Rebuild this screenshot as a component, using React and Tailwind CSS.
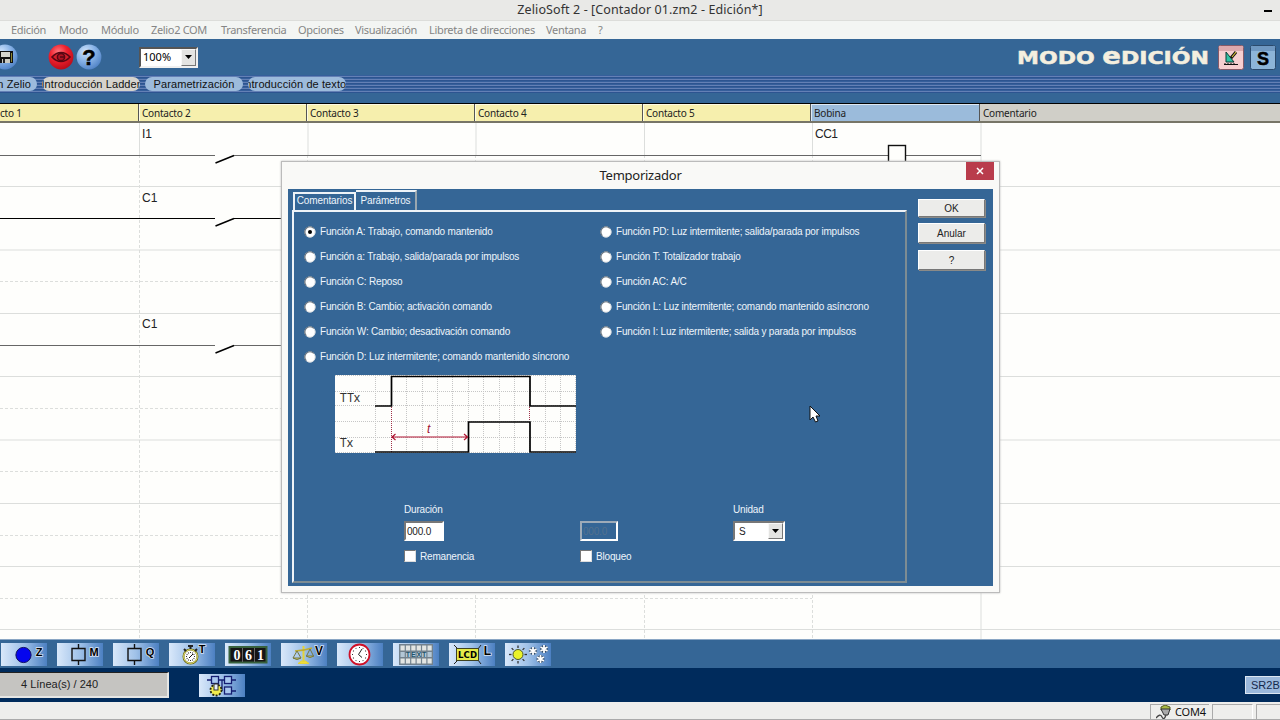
import React, { useState } from "react";

const menu = [
  { label: "Edición", w: "w-[48px]" },
  { label: "Modo", w: "w-[42px]" },
  { label: "Módulo", w: "w-[50px]" },
  { label: "Zelio2 COM", w: "w-[70px]" },
  { label: "Transferencia", w: "w-[77px]" },
  { label: "Opciones", w: "w-[57px]" },
  { label: "Visualización", w: "w-[74px]" },
  { label: "Libreta de direcciones", w: "w-[117px]" },
  { label: "Ventana", w: "w-[52px]" },
  { label: "?", w: "w-[20px]" },
];

const leftFunctions = [
  "Función A: Trabajo, comando mantenido",
  "Función a: Trabajo, salida/parada por impulsos",
  "Función C: Reposo",
  "Función B: Cambio; activación comando",
  "Función W: Cambio; desactivación comando",
  "Función D: Luz intermitente; comando mantenido síncrono",
];

const rightFunctions = [
  "Función PD: Luz intermitente; salida/parada por impulsos",
  "Función T: Totalizador trabajo",
  "Función AC: A/C",
  "Función L: Luz intermitente; comando mantenido asíncrono",
  "Función I: Luz intermitente; salida y parada por impulsos",
];

function SaveIcon() {
  return (
    <svg width="19" height="26" viewBox="0 0 19 26">
      <circle cx="5" cy="13" r="12.5" fill="url(#ball)" />
      <path d="M-2 7H13V19H0L-2 17Z" fill="#111" />
      <rect x="1" y="8" width="9" height="5" fill="#d5d5ce" />
      <rect x="2" y="15" width="8" height="4" fill="#c9c9c0" />
      <rect x="3" y="15" width="2" height="4" fill="#222" />
      <path d="M11.500 9V18" stroke="#8a8632" />
    </svg>
  );
}

function EyeIcon() {
  return (
    <svg width="26" height="26" viewBox="0 0 26 26">
      <defs>
        <radialGradient id="redball" cx="40%" cy="30%" r="75%">
          <stop offset="0" stopColor="#ff7a80" />
          <stop offset=".45" stopColor="#f0222f" />
          <stop offset="1" stopColor="#b50a17" />
        </radialGradient>
      </defs>
      <circle cx="13" cy="13" r="12.400" fill="url(#redball)" />
      <path
        d="M4 13Q8 8.500 13 8.500T22 13Q18 17.500 13 17.500T4 13Z"
        fill="#d3202b"
        stroke="#560713"
        strokeWidth="1.600"
      />
      <circle cx="13" cy="13" r="3.600" fill="#b01422" stroke="#560713" strokeWidth="1.500" />
      <path d="M12 13H16" stroke="#560713" strokeWidth="1.500" />
    </svg>
  );
}

function HelpIcon() {
  return (
    <svg width="26" height="26" viewBox="0 0 26 26">
      <defs>
        <radialGradient id="ball" cx="35%" cy="28%" r="80%">
          <stop offset="0" stopColor="#cfe3fb" />
          <stop offset=".5" stopColor="#86b1e6" />
          <stop offset="1" stopColor="#4c7fc4" />
        </radialGradient>
      </defs>
      <circle cx="13" cy="13" r="12.400" fill="url(#ball)" />
      <text
        x="13"
        y="21"
        textAnchor="middle"
        fontFamily="Liberation Sans, sans-serif"
        fontWeight="bold"
        fontSize="22"
        stroke="#000"
        strokeWidth=".5"
      >
        ?
      </text>
    </svg>
  );
}

function Arrow() {
  return (
    <svg width="7" height="4" viewBox="0 0 7 4">
      <path d="M0 0H7L3.500 4Z" />
    </svg>
  );
}

function DropButton() {
  return (
    <span className="flex h-full w-[15px] items-center justify-center border border-t-[#f8f8f8] border-r-[#777] border-b-[#777] border-l-[#f8f8f8] bg-[#e4e4e2]">
      <Arrow />
    </span>
  );
}

function Toolbar() {
  return (
    <div className="flex h-9 items-center">
      <SaveIcon />
      <div className="ml-[29px] flex gap-[2px]">
        <EyeIcon />
        <HelpIcon />
      </div>
      <div className="ml-[37px] flex h-[21px] w-[59px] items-center justify-between border-2 border-t-[#555] border-r-[#f0f0f0] border-b-[#f0f0f0] border-l-[#555] bg-white pl-[2px] text-[11px]">
        <span className="font-['Noto_Sans',sans-serif]">100%</span>
        <DropButton />
      </div>
      <svg className="ml-auto" width="200" height="36" viewBox="0 0 200 36">
        <text
          x="4"
          y="25"
          textLength="192"
          lengthAdjust="spacingAndGlyphs"
          fontFamily="DejaVu Sans, sans-serif"
          fontWeight="bold"
          fontSize="18.500"
          fill="#f4efdf"
          stroke="#f4efdf"
          strokeWidth=".5"
        >
          MODO <tspan fontSize="23">e</tspan>DICIÓN
        </text>
      </svg>
      <svg className="ml-[5px]" width="26" height="25" viewBox="0 0 26 25">
        <rect x=".5" y=".5" width="25" height="24" rx="2" fill="#f6cfd0" stroke="#865a67" />
        <rect x="1" y="1" width="24" height="5" fill="#dca9ad" />
        <path d="M8 7V17H16Z" fill="#31c2a4" stroke="#0b3b35" />
        <path d="M6 19.500H20M7 18V20M10 18V20M13 18V20M16 18V20" stroke="#111" />
        <path d="M13 13L18 7" stroke="#111" strokeWidth="3" />
        <path d="M14 12L18 7" stroke="#e1c63c" strokeWidth="1.200" />
      </svg>
      <svg className="mr-[4px] ml-[6px]" width="26" height="25" viewBox="0 0 26 25">
        <rect x=".5" y=".5" width="25" height="24" rx="2" fill="#8db5d8" stroke="#2b4a6c" />
        <rect x="1" y="1" width="24" height="5" fill="#6f98c1" />
        <text
          x="13"
          y="19.500"
          textAnchor="middle"
          fontFamily="Liberation Sans, sans-serif"
          fontWeight="bold"
          fontSize="18"
          stroke="#000"
          strokeWidth=".5"
        >
          S
        </text>
      </svg>
    </div>
  );
}

function ModeTab({ children, active }) {
  return (
    <div
      className={`flex h-[14px] w-[98px] items-center justify-center overflow-hidden rounded-full whitespace-nowrap ${
        active ? "bg-[#d5d3cd]" : "bg-[#9dbbdc]"
      }`}
    >
      {children}
    </div>
  );
}

function ModeTabs() {
  return (
    <div className="h-7">
      <div className="flex h-[18px] items-center gap-[5px] bg-[repeating-linear-gradient(to_bottom,#365f9b_0px,#365f9b_1px,#6480b5_1px,#6480b5_2px,#2d5490_2px,#2d5490_3px)] text-[11px] tracking-[0.1px] text-[#111]">
        <div className="flex h-[14px] w-[37px] items-center justify-end overflow-hidden rounded-r-full bg-[#9dbbdc] pr-[6px] whitespace-nowrap">
          Configuración Zelio
        </div>
        <ModeTab active>Introducción Ladder</ModeTab>
        <ModeTab>Parametrización</ModeTab>
        <ModeTab>Introducción de textos</ModeTab>
      </div>
    </div>
  );
}

function HeaderCell({ children, className }) {
  return (
    <div className={`flex items-center border-r border-[#555] pt-px pl-[3px] shadow-[inset_1px_1px_0_#ffffffaa] ${className}`}>
      {children}
    </div>
  );
}

function ColumnHeaders() {
  return (
    <div className="flex h-5 border-t border-b-2 border-t-black border-b-[#777567] font-['Noto_Sans',sans-serif] text-[10px] tracking-[-0.2px] text-[#222]">
      <div className="flex w-[139px] items-center border-r border-[#555] bg-[#f6efad] pt-px">cto 1</div>
      <HeaderCell className="w-[168px] bg-[#f6efad]">Contacto 2</HeaderCell>
      <HeaderCell className="w-[168px] bg-[#f6efad]">Contacto 3</HeaderCell>
      <HeaderCell className="w-[168px] bg-[#f6efad]">Contacto 4</HeaderCell>
      <HeaderCell className="w-[168px] bg-[#f6efad]">Contacto 5</HeaderCell>
      <HeaderCell className="w-[169px] bg-[#9bbbdb]">Bobina</HeaderCell>
      <div className="flex flex-1 items-center bg-[#d0cfc8] pt-px pl-[3px]">Comentario</div>
    </div>
  );
}

function Ladder() {
  const rungs = [32.5, 95.5, 222.5];
  return (
    <svg className="block" width="1280" height="516" viewBox="0 0 1280 516">
      <rect width="1280" height="516" fill="#fefefc" />
      <g stroke="#dcdedc">
        {[63.5, 127, 190.5, 253.5, 317, 380.5, 443.5, 506.5].map((y) => (
          <path key={y} d={`M0 ${y}H1280`} />
        ))}
        <g strokeDasharray="3 2">
          {[158.5, 285.5, 348.5, 412.5, 475.5].map((y) => (
            <path key={y} d={`M0 ${y}H812`} />
          ))}
          {[139.5, 307.5, 475.5, 644.5, 812.5].map((x) => (
            <path key={x} d={`M${x} 32V516`} />
          ))}
        </g>
        {[139.5, 308, 476, 644.5, 812.5].map((x) => (
          <path key={x} d={`M${x} 0V32`} />
        ))}
        <path d="M981 0V516" />
      </g>
      {rungs.map((y, i) => (
        <g key={y}>
          <path
            d={`M0 ${y}H215M234 ${y}H${i === 0 ? 888 : 290}`}
            stroke={i === 1 ? "#000" : "#666"}
          />
          <path d={`M215.500 ${y + 7.5}L234 ${y}`} stroke="#000" strokeWidth="1.500" />
        </g>
      ))}
      <path d="M906 32.500H981" stroke="#666" />
      <rect x="888.500" y="22.500" width="17" height="20" fill="#fefefc" stroke="#111" strokeWidth="1.400" />
      <g fontFamily="Liberation Sans, sans-serif" fontSize="12" fill="#222">
        <text x="142" y="15">I1</text>
        <text x="142" y="79">C1</text>
        <text x="142" y="205">C1</text>
        <text x="815" y="15" textLength="23">CC1</text>
      </g>
    </svg>
  );
}

function Letter({ x, y, size = 12, anchor = "middle", fill = "#000", children }) {
  return (
    <text
      x={x}
      y={y}
      textAnchor={anchor}
      fontFamily="Liberation Sans, sans-serif"
      fontWeight="bold"
      fontSize={size}
      fill={fill}
      stroke="#d6e4f6"
      strokeWidth="1.600"
      paintOrder="stroke"
    >
      {children}
    </text>
  );
}

function Tool({ children }) {
  return (
    <div className="h-[23px] w-[46px] bg-linear-to-r from-[#d9e8fa] via-[#9fc1e8] to-[#4c80c2]">
      <svg width="46" height="23" viewBox="0 0 46 23">
        {children}
      </svg>
    </div>
  );
}

function Block({ letter }) {
  return (
    <Tool>
      <path d="M21.500 1V5M21.500 18V22M15 5.500H28V17.500H15Z" fill="none" stroke="#111" strokeWidth="1.400" />
      <Letter x="37" y="13" size="11">
        {letter}
      </Letter>
    </Tool>
  );
}

function BlockBar() {
  const ticks = [0, 30, 60, 90, 120, 150, 180, 210, 240, 270, 300, 330];
  return (
    <div className="flex h-[29px] items-center gap-[10px] border-t border-[#8aa6c4] bg-[#356696] pl-px">
      <Tool>
        <circle cx="22.500" cy="12" r="7.600" fill="#0505ee" stroke="#101060" />
        <Letter x="38" y="13" size="11">Z</Letter>
      </Tool>
      <Block letter="M" />
      <Block letter="Q" />
      <Tool>
        <circle cx="21.500" cy="13.500" r="7" fill="#fff" stroke="#6d6a18" strokeWidth="2" />
        <circle cx="21.500" cy="13.500" r="6.800" fill="none" stroke="#eeea78" strokeWidth="1" />
        <path d="M19 3H24M21.500 3V6M15 6L17 8M28 6L26 8" stroke="#222" strokeWidth="2" />
        <path d="M20 15L24 11" stroke="#111" />
        {ticks.map((a) => (
          <path key={a} d="M21.500 9V10" stroke="#333" transform={`rotate(${a} 21.5 13.5)`} />
        ))}
        <Letter x="33" y="10" size="11">T</Letter>
      </Tool>
      <Tool>
        <rect x="4.500" y="4" width="37" height="15.500" fill="#151515" stroke="#37613c" strokeWidth="2" />
        <path d="M17.500 5V19M29.500 5V19" stroke="#666" />
        <g
          fontFamily="Liberation Serif, serif"
          fontWeight="bold"
          fontSize="14"
          fill="#fff"
          textAnchor="middle"
        >
          <text x="12" y="16.500">0</text>
          <text x="23.500" y="16.500">6</text>
          <text x="35.500" y="16.500">1</text>
        </g>
      </Tool>
      <Tool>
        <path d="M17 20.500H28L24.500 18H20.500Z" fill="#f1df36" stroke="#e4d33a" />
        <path d="M22.500 3V19" stroke="#e4d33a" strokeWidth="2" />
        <path d="M14 8Q22 8 31 5" fill="none" stroke="#c0ad30" strokeWidth="1.500" />
        <path d="M16 8L12 15H20ZM29 6L25.500 13H32.500Z" fill="none" stroke="#76773c" />
        <path d="M12 15Q16 18 20 15M25 13Q29 16 33 13" fill="#aeb15e" stroke="#76773c" />
        <Letter x="38" y="12" size="12">V</Letter>
      </Tool>
      <Tool>
        <circle cx="22.500" cy="11.500" r="10" fill="#fff" stroke="#cf1027" strokeWidth="1.800" />
        {ticks.map((a) => (
          <path key={a} d="M22.500 4V5" stroke="#333" transform={`rotate(${a} 22.5 11.5)`} />
        ))}
        <path d="M25 6L21.500 11.500L25 14.500" fill="none" stroke="#222" />
      </Tool>
      <Tool>
        <rect x="6" y="1" width="34" height="21" fill="#73828e" />
        {[0, 1, 2].map((r) =>
          [0, 1, 2, 3, 4, 5].map((c) => (
            <rect
              key={`${r}-${c}`}
              x={7.5 + c * 5.4}
              y={2.5 + r * 6.5}
              width="4.200"
              height="5"
              fill={r === 1 ? "#b3c7d6" : "#e3e5e2"}
            />
          ))
        )}
        <g fontFamily="Liberation Sans, sans-serif" fontSize="7" fontWeight="bold" fill="#24556c" textAnchor="middle">
          <text x="15" y="14">T</text>
          <text x="20.400" y="14">E</text>
          <text x="25.800" y="14">X</text>
          <text x="31.200" y="14">T</text>
        </g>
      </Tool>
      <Tool>
        <path d="M5 2L9 6M5 21L9 17M32 2L29 6M32 21L29 17" stroke="#222" />
        <rect x="7.500" y="5.500" width="22" height="12" fill="#e6ea49" stroke="#3f4220" />
        <text x="18.500" y="15" textAnchor="middle" fontFamily="DejaVu Sans, sans-serif" fontWeight="bold" fontSize="8.500" textLength="19">
          LCD
        </text>
        <Letter x="38.500" y="12" size="12">L</Letter>
      </Tool>
      <Tool>
        {[0, 45, 90, 135, 180, 225, 270, 315].map((a) => (
          <path key={a} d="M13 2.500V5" stroke="#333" strokeWidth="1.300" transform={`rotate(${a} 13 11.5)`} />
        ))}
        <circle cx="13" cy="11.500" r="5" fill="#eaf32b" stroke="#4e5a28" />
        {[
          [28, 8],
          [39, 6],
          [35.5, 16],
        ].map(([x, y]) => (
          <g key={x} transform={`translate(${x} ${y})`}>
            <path d="M0-4V4M-3.500-2L3.500 2M3.500-2L-3.500 2" stroke="#263f5a" strokeWidth="3" />
            <path d="M0-4V4M-3.500-2L3.500 2M3.500-2L-3.500 2" stroke="#fff" strokeWidth="1.800" />
          </g>
        ))}
      </Tool>
    </div>
  );
}

function InfoBar() {
  return (
    <div className="flex h-[34px] items-center bg-[#002b5c]">
      <div className="flex h-[26px] w-[169px] items-center border-t border-r-2 border-b-2 border-t-[#222] border-r-[#e6e6e4] border-b-[#e6e6e4] bg-[#c5c4c1] pl-[21px] text-[11px] text-[#222]">
        4 Línea(s) / 240
      </div>
      <div className="ml-[30px]">
        <Tool>
          <path d="M8 6H37M26 17H37M23 6V17" stroke="#151e72" strokeWidth="1.300" />
          <rect x="12.500" y="2.500" width="7" height="7" fill="#a9c8ef" stroke="#151e72" strokeWidth="1.300" />
          <rect x="25.500" y="2.500" width="7" height="7" fill="#a9c8ef" stroke="#151e72" strokeWidth="1.300" />
          <rect x="25.500" y="13" width="7" height="7" fill="#a9c8ef" stroke="#151e72" strokeWidth="1.300" />
          <circle cx="17" cy="16" r="5.500" fill="#f2ec4c" stroke="#25250e" strokeWidth="1.800" strokeDasharray="2 1.400" />
          <rect x="15" y="10" width="4" height="6" fill="#e8f0fa" stroke="#333" />
        </Tool>
      </div>
      <div className="ml-auto flex h-[18px] w-[35px] items-center overflow-hidden border border-r-0 border-[#dce6f2] bg-[#9ab8dc] pl-[5px] text-[11px] whitespace-nowrap text-[#14284b]">
        SR2B201FU
      </div>
    </div>
  );
}

function StatusBar() {
  return (
    <div className="flex h-[18px] items-center justify-end gap-[3px] border-b border-[#aaa] bg-[#eeeeec] pt-[2px]">
      <div className="flex h-[15px] w-[59px] items-center gap-[4px] border-t border-l border-[#aaa] pl-[5px] font-['Noto_Sans',sans-serif] text-[11px] tracking-[-0.2px] text-[#111]">
        <svg width="15" height="14" viewBox="0 0 15 14">
          <path d="M5 2L9 0L14 2V5H5Z" fill="#a9b944" stroke="#555b20" />
          <path d="M5 4H14L12 10H8Z" fill="#aaa" stroke="#333" />
          <path d="M0 13Q4 8 6 12T10 10" fill="none" stroke="#444" strokeWidth="1.300" />
        </svg>
        COM4
      </div>
      <div className="h-[15px] w-[41px] border-t border-r border-l border-t-[#aaa] border-r-white border-l-[#aaa]" />
      <div className="h-[15px] w-[24px] border-t border-l border-[#aaa]" />
    </div>
  );
}

function Radio({ label, checked, onChange }) {
  return (
    <label className="flex h-[25px] items-center gap-[4px] whitespace-nowrap">
      <input type="radio" className="sr-only" checked={checked} onChange={onChange} />
      <svg width="12" height="12" viewBox="0 0 12 12">
        <circle cx="6" cy="6" r="5.200" fill="#fff" stroke="#d9dde0" />
        <path d="M2.300 9.700A5.200 5.200 0 0 1 9.700 2.300" fill="none" stroke="#69737d" strokeWidth="1.200" />
        {checked && <circle cx="6" cy="6" r="2" />}
      </svg>
      {label}
    </label>
  );
}

function Chronogram() {
  const cols = [40.5, 56.5, 71.5, 87.5, 102.5, 117.5, 133.5, 148.5, 164.5, 179.5, 194.5, 210.5, 225.5, 240.5];
  return (
    <svg width="241" height="78" viewBox="0 0 241 78">
      <rect width="241" height="78" fill="#fefefc" />
      <g stroke="#c6c6c6" strokeDasharray="1 1">
        {cols.map((x) => (
          <path key={x} d={`M${x} 0V78`} />
        ))}
        {[0.5, 16.5, 30.5, 46.5, 62.5, 77.5].map((y) => (
          <path key={y} d={`M0 ${y}H241`} />
        ))}
      </g>
      <g fontFamily="Noto Sans, sans-serif" fontSize="12" fill="#333">
        <text x="5" y="27" textLength="20">TTx</text>
        <text x="5" y="72" textLength="13">Tx</text>
      </g>
      <path d="M56.500 30V77M194.500 30V46" stroke="#a0324a" strokeDasharray="1 1" />
      <path d="M40 31H56.500V1.500H195V31H241M40 77H133.500V47H195V77H241" fill="none" stroke="#000" strokeWidth="1.700" />
      <path d="M57 62H132M60.500 59L57 62L60.500 65M129 59L132.500 62L129 65" fill="none" stroke="#b01532" strokeWidth="1.200" />
      <text x="92" y="58" fontFamily="Liberation Sans, sans-serif" fontStyle="italic" fontSize="12" fill="#a01030">
        t
      </text>
    </svg>
  );
}

function Check({ label }) {
  return (
    <label className="flex h-3 items-center gap-[4px]">
      <span className="h-3 w-3 border border-t-[#777] border-r-[#ddd] border-b-[#ddd] border-l-[#777] bg-white" />
      {label}
    </label>
  );
}

function Field({ title, check, children }) {
  return (
    <div className="flex w-[80px] flex-col">
      <span className="h-[18px] leading-[14px]">{title}</span>
      <div className="mb-[9px] h-5">{children}</div>
      {check && <Check label={check} />}
    </div>
  );
}

function DialogButton({ children, className }) {
  return (
    <button
      className={`w-[67px] border border-t-white border-r-[#777] border-b-[#777] border-l-white bg-[#ececea] text-[10px] text-[#222] shadow-[1px_1px_0_#8a8a88] ${className}`}
    >
      {children}
    </button>
  );
}

function TimerDialog() {
  const [selected, setSelected] = useState(leftFunctions[0]);
  return (
    <div className="absolute top-[161px] left-[281px] flex h-[432px] w-[719px] flex-col border border-[#bbb] bg-[#f9f9f7] px-[6px] pb-[6px] shadow-[0_0_2px_#bbb]">
      <div className="relative flex h-[27px] shrink-0 items-center justify-center font-['Noto_Sans',sans-serif] text-[13px] tracking-[-0.25px] text-[#222]">
        Temporizador
        <button className="absolute top-0 right-[-1px] flex h-[18px] w-[28px] items-center justify-center bg-[#b93c4c]">
          <svg width="8" height="8" viewBox="0 0 8 8">
            <path d="M1 1L7 7M7 1L1 7" stroke="#fff" strokeWidth="1.500" />
          </svg>
        </button>
      </div>
      <div className="flex flex-1 bg-[#356696] pl-1">
        <div className="flex w-[615px] flex-col pt-[1px] text-[10px] tracking-[-0.19px] text-[#eef5fb]">
          <div className="flex h-[20px] items-end pl-[1px]">
            <div className="flex h-[18px] w-[63px] items-center justify-center border-2 border-b-0 border-[#eef3f8] pb-[4px] tracking-[-0.1px]">
              Comentarios
            </div>
            <div className="flex h-[20px] w-[61px] items-center justify-center border-t-2 border-r-2 border-t-[#eef3f8] border-r-[#9aa7b0] pb-px">
              Parámetros
            </div>
          </div>
          <div className="flex h-[373px] flex-col border-2 border-t-[#eef3f8] border-r-[#7d8c93] border-b-[#7d8c93] border-l-[#eef3f8] pt-[7px]">
            <div className="flex h-[150px] pl-[10px]">
              <div className="w-[296px]">
                {leftFunctions.map((f) => (
                  <Radio key={f} label={f} checked={selected === f} onChange={() => setSelected(f)} />
                ))}
              </div>
              <div>
                {rightFunctions.map((f) => (
                  <Radio key={f} label={f} checked={selected === f} onChange={() => setSelected(f)} />
                ))}
              </div>
            </div>
            <div className="mt-[6px] pl-[41px]">
              <Chronogram />
            </div>
            <div className="mt-[50px] flex pl-[110px]">
              <Field title="Duración" check="Remanencia">
                <div className="flex h-[20px] w-[40px] items-center border-2 border-t-[#777] border-r-white border-b-white border-l-[#777] bg-white pl-[1px] text-[#222]">
                  000.0
                </div>
              </Field>
              <div className="w-[96px]" />
              <Field title="" check="Bloqueo">
                <div className="flex h-[20px] w-[38px] items-center border-2 border-t-[#9eabb8] border-r-white border-b-white border-l-[#9eabb8] pl-[1px] text-[#53718e]">
                  000.0
                </div>
              </Field>
              <div className="w-[73px]" />
              <Field title="Unidad">
                <div className="flex h-[20px] w-[52px] items-center justify-between border-2 border-t-[#777] border-r-white border-b-white border-l-[#777] bg-white pl-[4px] text-[#222]">
                  S
                  <DropButton />
                </div>
              </Field>
            </div>
          </div>
        </div>
        <div className="flex flex-col pt-[10px] pl-[11px]">
          <DialogButton className="h-[18px]">OK</DialogButton>
          <DialogButton className="mt-[6px] h-[20px]">Anular</DialogButton>
          <DialogButton className="mt-[7px] h-[20px]">?</DialogButton>
        </div>
      </div>
    </div>
  );
}

export default function App() {
  return (
    <div className="relative flex h-[720px] w-[1280px] flex-col overflow-hidden bg-[#fefefc] font-['Liberation_Sans',sans-serif]">
      <div className="relative flex h-[21px] items-center justify-center border-b border-[#dcddda] bg-[#e9e9e7] pt-px font-['Noto_Sans',sans-serif] text-[12.5px] tracking-[0.1px] text-[#333]">
        ZelioSoft 2 - [Contador 01.zm2 - Edición*]
        <span className="absolute top-[10px] right-[8px] h-[2px] w-[8px] bg-black" />
      </div>
      <div className="flex h-[18px] items-center bg-[#f3f5f3] pl-[11px] font-['Noto_Sans',sans-serif] text-[11px] tracking-[-0.33px] text-[#858585]">
        {menu.map((m) => (
          <span key={m.label} className={`shrink-0 whitespace-nowrap ${m.w}`}>
            {m.label}
          </span>
        ))}
      </div>
      <div className="bg-[#356696]">
        <Toolbar />
        <ModeTabs />
      </div>
      <ColumnHeaders />
      <Ladder />
      <BlockBar />
      <InfoBar />
      <StatusBar />
      <TimerDialog />
      <svg className="absolute top-[405px] left-[809px]" width="12" height="19" viewBox="0 0 12 19">
        <path d="M1 1V15L4 12L6.500 17L9 16L7 11H11Z" fill="#fff" stroke="#111" />
      </svg>
    </div>
  );
}
